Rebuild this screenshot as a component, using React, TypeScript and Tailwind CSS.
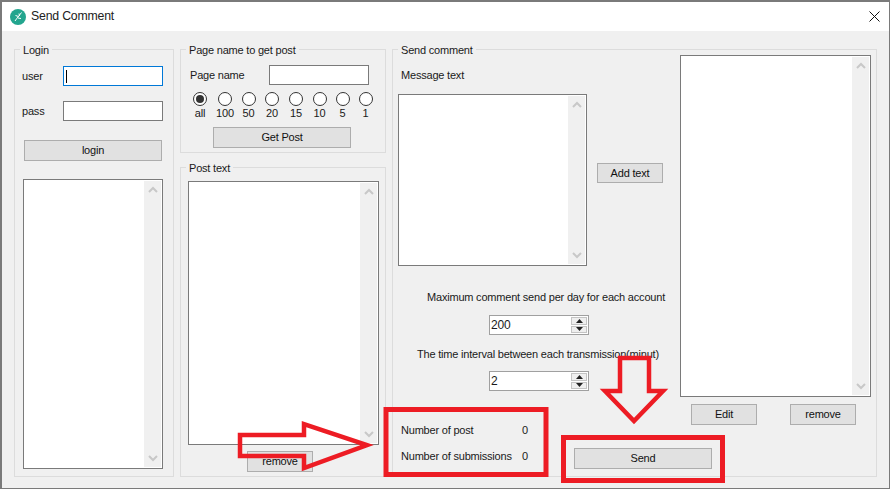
const font = { fontFamily: '"Liberation Sans", Arial, sans-serif' };

function GroupBox({ title, className = '', children }: { title: string; className?: string; children: React.ReactNode }) {
  return (
    <div className={`relative border border-[#dcdcdc] ${className}`}>
      <span className="absolute -top-[7px] left-[5px] bg-[#f0f0f0] px-[3px] leading-[14px]">{title}</span>
      {children}
    </div>
  );
}

function Btn({ label, className = '' }: { label: string; className?: string }) {
  return (
    <div className={`flex items-center justify-center border border-[#adadad] bg-[#e1e1e1] text-[#111] ${className}`}>
      {label}
    </div>
  );
}

// multi line box with the disabled vertical scrollbar
function ListBox({ className = '' }: { className?: string }) {
  return (
    <div className={`flex justify-end border border-[#7a7a7a] bg-white p-px ${className}`}>
      <div className="flex w-[17px] flex-col items-center justify-between bg-[#f0f0f0] py-[5px]">
        <svg width="10" height="7" viewBox="0 0 10 7" fill="none" stroke="#c8c8c8" strokeWidth="2">
          <path d="M1 6l4-4 4 4" />
        </svg>
        <svg width="10" height="7" viewBox="0 0 10 7" fill="none" stroke="#c8c8c8" strokeWidth="2">
          <path d="M1 1l4 4 4-4" />
        </svg>
      </div>
    </div>
  );
}

function Spinner({ value }: { value: string }) {
  return (
    <div className="flex h-[20px] w-[100px] items-center border border-[#a0a0a0] bg-white pl-px">
      <span className="flex-1 text-[12px]">{value}</span>
      <div className="mr-px flex h-[16px] w-[16px] flex-col gap-px">
        <div className="flex flex-1 items-center justify-center border border-[#c4c4c4] bg-[#efefef]">
          <svg width="7" height="4" viewBox="0 0 7 4"><path d="M3.500 0L7 4H0z" fill="#222" /></svg>
        </div>
        <div className="flex flex-1 items-center justify-center border border-[#c4c4c4] bg-[#efefef]">
          <svg width="7" height="4" viewBox="0 0 7 4"><path d="M0 0h7L3.500 4z" fill="#222" /></svg>
        </div>
      </div>
    </div>
  );
}

const radios = [
  { label: 'all', x: 'w-[26px]', on: true },
  { label: '100', x: 'w-[24px]', on: false },
  { label: '50', x: 'w-[23px]', on: false },
  { label: '20', x: 'w-[24px]', on: false },
  { label: '15', x: 'w-[24px]', on: false },
  { label: '10', x: 'w-[23px]', on: false },
  { label: '5', x: 'w-[23px]', on: false },
  { label: '1', x: 'w-[23px]', on: false },
];

export default function App() {
  return (
    <div
      className="relative h-[489px] w-[890px] overflow-hidden border-2 border-b-[1px] border-r-[1px] border-[#7a7a7a] bg-[#f0f0f0] text-[11px] tracking-[-0.2px] text-[#1a1a1a]"
      style={font}
    >
      {/* title bar */}
      <div className="flex h-[29px] items-center justify-between bg-white pl-[8px] pr-[9px]">
        <div className="flex items-center gap-[5px]">
          <svg width="16" height="16" viewBox="0 0 16 16">
            <circle cx="8" cy="8" r="8" fill="#23a58e" />
            <path d="M5 12C7 9 9 7 11.500 3.500M5.500 6.500l3 1M8 9l3 .5M9 4.500l.5 2.500" stroke="#fff" strokeWidth="1" fill="none" />
          </svg>
          <span className="text-[12.300px] text-[#222]">Send Comment</span>
        </div>
        <svg width="11" height="11" viewBox="0 0 11 11" stroke="#111" strokeWidth="1">
          <path d="M.5.500l10 10M10.500.500l-10 10" />
        </svg>
      </div>

      {/* body */}
      <div className="flex gap-[6px] pl-[12px] pt-[18px]">
        {/* login column */}
        <GroupBox title="Login" className="flex h-[428px] w-[160px] flex-col pl-[7px] pt-[16px]">
          <div className="flex h-[20px] items-center">
            <span className="w-[41px]">user</span>
            <div className="flex h-[20px] w-[100px] items-center border border-[#0078d7] bg-white pl-[2px]">
              <div className="h-[13px] w-px bg-black" />
            </div>
          </div>
          <div className="mt-[15px] flex h-[20px] items-center">
            <span className="w-[41px]">pass</span>
            <div className="h-[20px] w-[100px] border border-[#7a7a7a] bg-white" />
          </div>
          <Btn label="login" className="ml-[2px] mt-[19px] h-[21px] w-[138px]" />
          <ListBox className="mt-[18px] h-[290px] w-[140px] ml-px" />
        </GroupBox>

        {/* post column */}
        <div className="flex w-[206px] flex-col gap-[14px]">
          <GroupBox title="Page name to get post" className="flex h-[104px] flex-col pl-[9px] pt-[15px]">
            <div className="flex h-[20px] items-center">
              <span className="w-[79px]">Page name</span>
              <div className="h-[20px] w-[100px] border border-[#7a7a7a] bg-white" />
            </div>
            <div className="-ml-[3px] mt-[7px] flex">
              {radios.map((r) => (
                <div key={r.label} className={`flex flex-col items-center ${r.x}`}>
                  <div className="flex h-[14px] w-[14px] items-center justify-center rounded-full border border-[#333] bg-white">
                    {r.on && <div className="h-[8px] w-[8px] rounded-full bg-[#333]" />}
                  </div>
                  <span className="leading-[14px]">{r.label}</span>
                </div>
              ))}
            </div>
            <Btn label="Get Post" className="ml-[23px] mt-[7px] h-[21px] w-[138px]" />
          </GroupBox>
          <GroupBox title="Post text" className="flex h-[310px] flex-col pl-[7px] pt-[13px]">
            <ListBox className="h-[264px] w-[191px]" />
            <Btn label="remove" className="ml-[59px] mt-[6px] h-[21px] w-[66px]" />
          </GroupBox>
        </div>

        {/* send comment column */}
        <GroupBox title="Send comment" className="flex h-[428px] w-[485px] pl-[5px] pt-[5px]">
          <div className="flex w-[282px] flex-col">
            <span className="ml-[3px] mt-[13px] leading-[14px]">Message text</span>
            <div className="mt-[12px] flex items-start">
              <ListBox className="h-[172px] w-[189px]" />
              <Btn label="Add text" className="ml-[10px] mt-[69px] h-[20px] w-[66px]" />
            </div>
            <span className="ml-[29px] mt-[24px] leading-[14px] whitespace-nowrap">Maximum comment send per day for each account</span>
            <div className="ml-[91px] mt-[11px]"><Spinner value="200" /></div>
            <span className="ml-[19px] mt-[12px] leading-[14px] whitespace-nowrap">The time interval between each transmission(minut)</span>
            <div className="ml-[91px] mt-[10px]"><Spinner value="2" /></div>
            <div className="mt-[17px] flex">
              <div className="ml-[3px] flex w-[173px] shrink-0 flex-col gap-[12px] pt-[15px]">
                <div className="flex h-[14px] items-center leading-[14px]">
                  <span className="w-[121px]">Number of post</span>
                  <span>0</span>
                </div>
                <div className="flex h-[14px] items-center leading-[14px]">
                  <span className="w-[121px] whitespace-nowrap">Number of submissions</span>
                  <span>0</span>
                </div>
              </div>
              <Btn label="Send" className="mt-[40px] h-[21px] w-[138px] shrink-0" />
            </div>
          </div>
          <div className="flex w-[191px] flex-col">
            <ListBox className="h-[342px] shrink-0" />
            <div className="mt-[7px] flex gap-[33px] pl-[11px]">
              <Btn label="Edit" className="h-[21px] w-[66px]" />
              <Btn label="remove" className="h-[21px] w-[66px]" />
            </div>
          </div>
        </GroupBox>
      </div>

      {/* red annotations drawn over the screenshot */}
      <svg className="pointer-events-none absolute -left-[2px] -top-[2px]" width="890" height="489" fill="none" stroke="#ed1c24" strokeWidth="5">
        <rect x="386" y="409.500" width="160" height="65" />
        <rect x="563.500" y="437.500" width="159" height="43" />
        <path d="M240 435h64v-11l63 21-63 23v-12h-64z" strokeWidth="4.500" />
        <path d="M620 358h29v33h14l-29 30-29-30h15z" strokeWidth="4.500" />
      </svg>
    </div>
  );
}
